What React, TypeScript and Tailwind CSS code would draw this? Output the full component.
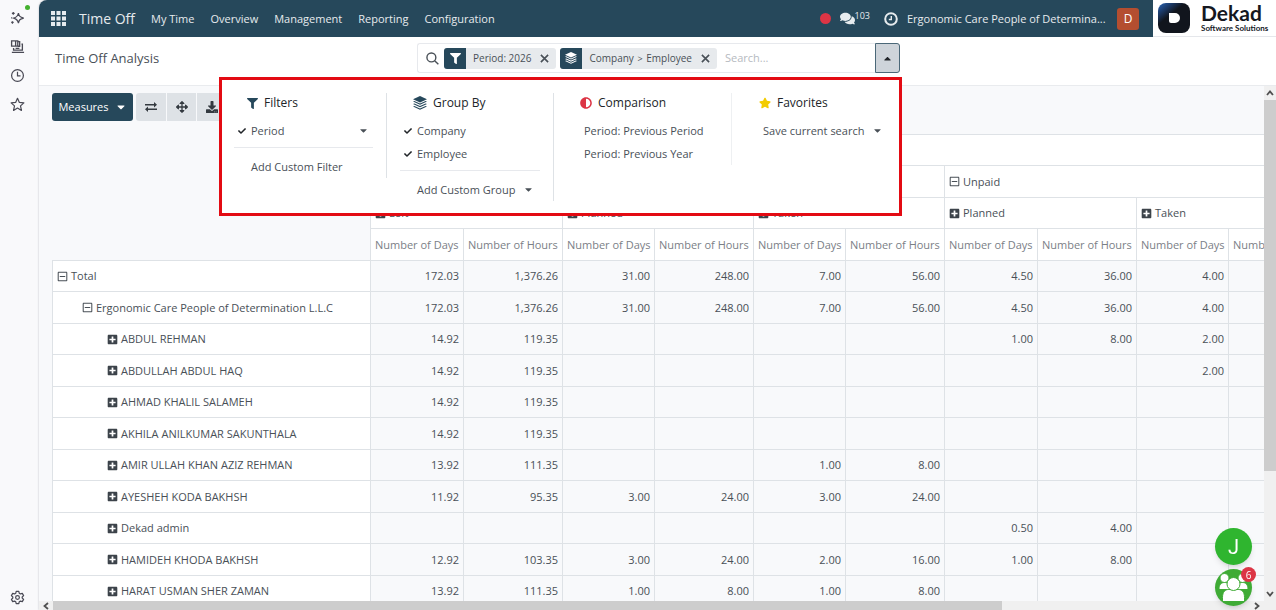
import { useState } from "react";
import type { ReactNode } from "react";
import {
  FaAdjust,
  FaArrowsAlt,
  FaCaretDown,
  FaCaretUp,
  FaCheck,
  FaComments,
  FaDownload,
  FaFilter,
  FaPlusSquare,
  FaRegMinusSquare,
  FaStar,
} from "react-icons/fa";

const NAV_LINKS = ["My Time", "Overview", "Management", "Reporting", "Configuration"];

const MEASURES = ["Number of Days", "Number of Hours"];

const GROUPS = ["Left", "Planned", "Taken", "Planned", "Taken"];

const COLUMN_WIDTHS = [
  "w-[318px]",
  "w-[93px]",
  "w-[99px]",
  "w-[92px]",
  "w-[99px]",
  "w-[92px]",
  "w-[99px]",
  "w-[93px]",
  "w-[99px]",
  "w-[92px]",
  "w-[99px]",
];

interface PivotRow {
  label: string;
  level: 0 | 1 | 2;
  values: string[];
}

const ROWS: PivotRow[] = [
  { label: "Total", level: 0, values: ["172.03", "1,376.26", "31.00", "248.00", "7.00", "56.00", "4.50", "36.00", "4.00", ""] },
  { label: "Ergonomic Care People of Determination L.L.C", level: 1, values: ["172.03", "1,376.26", "31.00", "248.00", "7.00", "56.00", "4.50", "36.00", "4.00", ""] },
  { label: "ABDUL REHMAN", level: 2, values: ["14.92", "119.35", "", "", "", "", "1.00", "8.00", "2.00", ""] },
  { label: "ABDULLAH ABDUL HAQ", level: 2, values: ["14.92", "119.35", "", "", "", "", "", "", "2.00", ""] },
  { label: "AHMAD KHALIL SALAMEH", level: 2, values: ["14.92", "119.35", "", "", "", "", "", "", "", ""] },
  { label: "AKHILA ANILKUMAR SAKUNTHALA", level: 2, values: ["14.92", "119.35", "", "", "", "", "", "", "", ""] },
  { label: "AMIR ULLAH KHAN AZIZ REHMAN", level: 2, values: ["13.92", "111.35", "", "", "1.00", "8.00", "", "", "", ""] },
  { label: "AYESHEH KODA BAKHSH", level: 2, values: ["11.92", "95.35", "3.00", "24.00", "3.00", "24.00", "", "", "", ""] },
  { label: "Dekad admin", level: 2, values: ["", "", "", "", "", "", "0.50", "4.00", "", ""] },
  { label: "HAMIDEH KHODA BAKHSH", level: 2, values: ["12.92", "103.35", "3.00", "24.00", "2.00", "16.00", "1.00", "8.00", "", ""] },
  { label: "HARAT USMAN SHER ZAMAN", level: 2, values: ["13.92", "111.35", "1.00", "8.00", "1.00", "8.00", "", "", "", ""] },
];

const LEVEL_PADDING = ["pl-1", "pl-[29px]", "pl-[54px]"];

const LayersIcon = ({ className }: { className?: string }) => (
  <svg viewBox="0 0 14 14" fill="currentColor" className={className} aria-hidden="true">
    <path d="M7 0 14 3.200 7 6.400 0 3.200Z" />
    <path d="M0 5.600 1.400 5 7 7.500 12.600 5 14 5.600 7 8.800Z" />
    <path d="M0 8.100 1.400 7.500 7 10 12.600 7.500 14 8.100 7 11.300Z" />
    <path d="M0 10.600 1.400 10 7 12.500 12.600 10 14 10.600 7 13.800Z" />
  </svg>
);

const CloseIcon = () => (
  <svg viewBox="0 0 10 10" className="size-[9px]" fill="none" stroke="currentColor" strokeWidth="1.8" aria-hidden="true">
    <path d="M1 1 9 9M9 1 1 9" />
  </svg>
);

const BrowserSidebar = () => {
  const button = "relative flex size-[22px] items-center justify-center text-[#4a4a55]";
  const svg = "size-[15px]";

  return (
    <aside className="flex w-[39px] shrink-0 flex-col items-center bg-[#f9f9fb] pt-1.5 pr-1">
      <button type="button" aria-label="Assistant" className={button}>
        <svg viewBox="0 0 16 16" className={svg} fill="none" stroke="currentColor" strokeWidth="1.3">
          <path d="M9 3.2C9.6 6.6 10.6 7.6 14.6 8.6 10.6 9.6 9.6 10.6 9 14 8.4 10.6 7.4 9.6 4 8.6 7.4 7.6 8.4 6.6 9 3.2Z" />
          <path d="M3.500 2v3M2 3.500h3M2.600 12v2.600M1.300 13.300h2.600M1.200 8.400h1" />
        </svg>
        <span className="absolute top-[-1px] right-[-1px] size-[5px] rounded-full bg-[#44b12f]" />
      </button>
      <button type="button" aria-label="Synced tabs" className={`${button} mt-[7px]`}>
        <svg viewBox="0 0 16 16" className={svg} fill="none" stroke="currentColor" strokeWidth="1.4">
          <path d="M1.700 2h6.600v5.600H1.700ZM6 2v5.600M8.300 2.700h2v5H8.300" />
          <path d="M3.800 9.500v2.300h9.400V5.500h-1M2 14.200h13M6 10h4" />
        </svg>
      </button>
      <button type="button" aria-label="History" className={`${button} mt-[7px]`}>
        <svg viewBox="0 0 16 16" className={svg} fill="none" stroke="currentColor" strokeWidth="1.3">
          <circle cx="8" cy="8" r="6.3" />
          <path d="M8 4v4.3h3.2" />
        </svg>
      </button>
      <button type="button" aria-label="Bookmarks" className={`${button} mt-[7px]`}>
        <svg viewBox="0 0 16 16" className={svg} fill="none" stroke="currentColor" strokeWidth="1.3" strokeLinejoin="round">
          <path d="M8 1.4 10 5.8 14.8 6.3 11.2 9.5 12.2 14.3 8 11.8 3.8 14.3 4.8 9.5 1.2 6.3 6 5.8Z" />
        </svg>
      </button>
      <button type="button" aria-label="Settings" className={`${button} mt-auto mb-[2px]`}>
        <svg viewBox="0 0 16 16" className={svg} fill="none" stroke="currentColor" strokeWidth="1.3" strokeLinejoin="round">
          <path d="M6.600 1.500h2.800l.5 2 1.200.7 2-.6 1.400 2.400L13 7.400v1.200l1.500 1.400-1.400 2.400-2-.6-1.200.7-.5 2H6.600l-.5-2-1.200-.7-2 .6L1.500 10 3 8.600V7.400L1.500 6 2.900 3.600l2 .6 1.200-.7Z" />
          <circle cx="8" cy="8" r="2" />
        </svg>
      </button>
    </aside>
  );
};

const CompanyLogo = () => (
  <div className="flex h-[37px] w-[123px] shrink-0 items-center gap-[11px] border-b border-gray-200 bg-white pl-[5px] text-[#15181f]">
    <svg viewBox="0 0 32 30" className="h-[30px] w-8 shrink-0" aria-hidden="true">
      <defs>
        <linearGradient id="logo" x1="0" y1="0" x2="0.6" y2="0.7">
          <stop offset="0" stopColor="#2a66b8" />
          <stop offset="0.3" stopColor="#1c3c6c" />
          <stop offset="0.6" stopColor="#11151d" />
        </linearGradient>
      </defs>
      <rect width="32" height="30" rx="8" fill="url(#logo)" />
      <path d="M11 10h6a5 5 0 0 1 5 5 5 5 0 0 1-5 5h-4a2 2 0 0 1-2-2Z" fill="#fff" />
    </svg>
    <div className="font-['Lato',sans-serif] font-bold whitespace-nowrap">
      <div className="text-[21px] leading-[20px]">Dekad</div>
      <div className="text-[8px] leading-[10px]">Software Solutions</div>
    </div>
  </div>
);

const NavBar = () => (
  <header className="flex h-[37px] shrink-0 items-center overflow-hidden rounded-tl-lg bg-[#26485b] text-[#e6ebee]">
    <button type="button" aria-label="Home menu" className="ml-3">
      <svg viewBox="0 0 15 15" className="size-[15px]" fill="currentColor">
        {[0, 5.5, 11].map((y) => [0, 5.5, 11].map((x) => <rect key={`${x}-${y}`} x={x} y={y} width="4" height="4" />))}
      </svg>
    </button>
    <a href="#" className="ml-[13px] text-[14px]">Time Off</a>
    <nav className="ml-4 flex gap-4">
      {NAV_LINKS.map((link) => (
        <a key={link} href="#">{link}</a>
      ))}
    </nav>
    <div className="ml-auto flex items-center">
      <span className="size-[11px] rounded-full bg-[#dc3545]" />
      <button type="button" aria-label="Messages" className="ml-[9px] flex items-center">
        <FaComments className="size-[15px]" />
        <span className="mb-1.5 text-[9px]">103</span>
      </button>
      <button type="button" aria-label="Activities" className="ml-[14px]">
        <svg viewBox="0 0 14 14" className="size-[14px]" fill="none" stroke="currentColor" strokeWidth="2">
          <circle cx="7" cy="7" r="5.800" />
          <path d="M7.300 4v3.500H4.800" strokeWidth="1.400" />
        </svg>
      </button>
      <button type="button" className="ml-[9px] w-[200px] text-left whitespace-nowrap">Ergonomic Care People of Determina...</button>
      <span className="mr-[14px] ml-[10px] flex size-[22px] items-center justify-center rounded-[3px] bg-[#b44e30] text-[12px] text-white">D</span>
    </div>
    <CompanyLogo />
  </header>
);

const Facet = ({ icon, label, children }: { icon: ReactNode; label: string; children: ReactNode }) => (
  <div className="flex h-[21px] shrink-0 items-center overflow-hidden rounded-[3px] bg-[#e7eaed] text-[10px]">
    <span className="flex h-full w-[22px] items-center justify-center bg-[#26485b] text-white">{icon}</span>
    <span className="pl-[7px] whitespace-pre">{children}</span>
    <button type="button" aria-label={`Remove ${label}`} className="pr-[7px] pl-[9px] text-[#495057]">
      <CloseIcon />
    </button>
  </div>
);

interface MenuColumnProps {
  icon: ReactNode;
  title: string;
  className: string;
  children: ReactNode;
}

const MenuColumn = ({ icon, title, className, children }: MenuColumnProps) => (
  <section className={className}>
    <h5 className="mb-1.5 flex h-5 items-center gap-1.5 pl-[13px] text-[12px] text-[#212529]">
      {icon}
      {title}
    </h5>
    {children}
  </section>
);

const MenuItem = ({ label, checked, caret }: { label: string; checked?: boolean; caret?: "near" | "end" }) => (
  <button type="button" className="flex h-[23px] w-full items-center pr-1 pl-1 text-left whitespace-nowrap">
    <span className="w-[13px] shrink-0 text-[#212529]">{checked && <FaCheck className="size-2" />}</span>
    {label}
    {caret && <FaCaretDown className={caret === "end" ? "ml-auto size-[11px] shrink-0" : "ml-2 size-[11px] shrink-0"} />}
  </button>
);

const SearchMenu = () => (
  <div className="absolute top-[34px] right-[-2px] z-10 flex h-[139px] w-[683px] items-start border-[3px] border-[#e30b13] bg-white pt-[13px] text-[#495057]">
    <MenuColumn
      icon={<FaFilter className="size-[11px] text-[#26485b]" />}
      title="Filters"
      className="w-[165px] border-r border-[#dee2e6] pr-[13px] pl-3"
    >
      <MenuItem label="Period" checked caret="end" />
      <hr className="mt-[5px] mb-[7px] border-[#e7e9ed]" />
      <MenuItem label="Add Custom Filter" />
    </MenuColumn>
    <MenuColumn
      icon={<LayersIcon className="size-[14px] text-[#26485b]" />}
      title="Group By"
      className="w-[167px] border-r border-[#dee2e6] pr-[13px] pl-[13px]"
    >
      <MenuItem label="Company" checked />
      <MenuItem label="Employee" checked />
      <hr className="mt-[5px] mb-[7px] border-[#e7e9ed]" />
      <MenuItem label="Add Custom Group" caret="near" />
    </MenuColumn>
    <MenuColumn
      icon={<FaAdjust className="size-3 text-[#dc3545]" />}
      title="Comparison"
      className="w-[178px] border-r border-[#eef0f2] pr-[13px] pl-[13px]"
    >
      <MenuItem label="Period: Previous Period" />
      <MenuItem label="Period: Previous Year" />
    </MenuColumn>
    <MenuColumn
      icon={<FaStar className="size-3 text-[#f3cc00]" />}
      title="Favorites"
      className="w-[165px] pl-[14px]"
    >
      <MenuItem label="Save current search" caret="near" />
    </MenuColumn>
  </div>
);

const SearchBar = () => {
  const [query, setQuery] = useState("");
  const [open, setOpen] = useState(true);

  return (
    <div className="relative flex h-[30px] w-[483px] shrink-0">
      <div className="flex min-w-0 flex-1 items-center gap-1 rounded-l-[3px] border border-r-0 border-[#e7e9ed] pl-2">
        <svg viewBox="0 0 14 14" className="mr-px size-[13px] shrink-0" fill="none" stroke="currentColor" strokeWidth="1.500" aria-hidden="true">
          <circle cx="5.800" cy="5.800" r="4.800" />
          <path d="M9.300 9.300 13.300 13.300" />
        </svg>
        <Facet label="Period" icon={<FaFilter className="size-[11px]" />}>
          Period: 2026
        </Facet>
        <Facet label="grouping" icon={<LayersIcon className="size-3" />}>
          Company <span className="px-px text-[9px]">&gt;</span> Employee
        </Facet>
        <input
          type="text"
          aria-label="Search"
          placeholder="Search..."
          value={query}
          onChange={(e) => setQuery(e.target.value)}
          className="min-w-0 flex-1 pl-1 outline-none placeholder:text-[#b6babf]"
        />
      </div>
      <button
        type="button"
        aria-label="Toggle search panel"
        onClick={() => setOpen(!open)}
        className="flex w-[25px] items-center justify-center rounded-r-[3px] border border-[#4b6878] bg-[#ced4da] text-[#212529]"
      >
        <FaCaretUp className="size-[11px]" />
      </button>
      {open && <SearchMenu />}
    </div>
  );
};

const Toolbar = () => (
  <div className="flex h-12 items-start gap-[3px] pt-[7px] pl-[13px]">
    <button type="button" className="flex h-7 w-[81px] items-center justify-center gap-1.5 rounded-[3px] bg-[#26485b] text-white">
      Measures <FaCaretDown className="size-3" />
    </button>
    <div className="flex h-7 gap-px overflow-hidden rounded-[3px] text-[#343a40]">
      <button type="button" aria-label="Flip axis" className="flex w-[30px] items-center justify-center bg-[#dee2e6]">
        <svg viewBox="0 0 12 10" className="h-[10px] w-3" fill="currentColor">
          <path d="M0 2h9V0l3 2.700-3 2.700V3.500H0ZM12 6.500H3V4.600L0 7.300 3 10V8H12Z" />
        </svg>
      </button>
      <button type="button" aria-label="Expand all" className="flex w-[29px] items-center justify-center bg-[#dee2e6]">
        <FaArrowsAlt className="size-3" />
      </button>
      <button type="button" aria-label="Download" className="flex w-[29px] items-center justify-center bg-[#dee2e6]">
        <FaDownload className="size-3" />
      </button>
    </div>
  </div>
);

const HeaderLabel = ({ label, expanded }: { label: string; expanded?: boolean }) => (
  <button type="button" className="flex items-center gap-[3px]">
    {expanded ? <FaRegMinusSquare className="size-[11px]" /> : <FaPlusSquare className="size-[11px] text-[#3c434a]" />}
    {label}
  </button>
);

const PivotTable = () => {
  const line = "border-t border-l border-[#dee2e6]";
  const head = `${line} bg-white px-1 text-left font-normal`;

  return (
    <table className="ml-[13px] w-[1275px] table-fixed border-separate border-spacing-0 whitespace-nowrap text-[#495057]">
      <colgroup>
        {COLUMN_WIDTHS.map((width, i) => (
          <col key={i} className={width} />
        ))}
      </colgroup>
      <thead>
        <tr className="h-[31px]">
          <td rowSpan={4} />
          <th colSpan={10} className={head} />
        </tr>
        <tr className="h-8">
          <th colSpan={6} className={head} />
          <th colSpan={4} className={head}>
            <HeaderLabel label="Unpaid" expanded />
          </th>
        </tr>
        <tr className="h-[31px]">
          {GROUPS.map((group, i) => (
            <th key={i} colSpan={2} className={head}>
              <HeaderLabel label={group} />
            </th>
          ))}
        </tr>
        <tr className="h-8">
          {GROUPS.map((_, i) =>
            MEASURES.map((measure) => (
              <th key={`${i}-${measure}`} className={`${head} text-[#7b8087]`}>
                {measure}
              </th>
            ))
          )}
        </tr>
      </thead>
      <tbody>
        {ROWS.map((row) => (
          <tr key={row.label} className="h-[31px] even:h-8">
            <th scope="row" className={`${line} bg-white text-left font-normal ${LEVEL_PADDING[row.level]}`}>
              <HeaderLabel label={row.label} expanded={row.level < 2} />
            </th>
            {row.values.map((value, i) => (
              <td key={i} className={`${line} pr-1 text-right`}>
                {value}
              </td>
            ))}
          </tr>
        ))}
      </tbody>
    </table>
  );
};

const Chevron = ({ d }: { d: string }) => (
  <svg viewBox="0 0 8 8" className="size-2 shrink-0" fill="none" stroke="#505050" strokeWidth="1.800" aria-hidden="true">
    <path d={d} />
  </svg>
);

const VerticalScrollbar = () => (
  <div className="flex w-3 shrink-0 flex-col items-center bg-[#f0f0f0]">
    <div className="flex h-[14px] items-center"><Chevron d="M1 6 4 2.500 7 6" /></div>
    <div className="h-[72%] w-full bg-[#cdcdcd]" />
    <div className="mt-auto flex h-[14px] items-center"><Chevron d="M1 2 4 5.500 7 2" /></div>
  </div>
);

const HorizontalScrollbar = () => (
  <div className="flex h-[9px] shrink-0 items-center bg-[#f0f0f0] pr-3">
    <div className="flex w-[14px] justify-center"><Chevron d="M6 1 2.500 4 6 7" /></div>
    <div className="h-full w-[949px] bg-[#cdcdcd]" />
    <div className="ml-auto flex w-[14px] justify-center"><Chevron d="M2 1 5.500 4 2 7" /></div>
  </div>
);

const ChatBubbles = () => (
  <div className="fixed right-6 bottom-1 z-20 flex flex-col gap-1">
    <button type="button" className="flex size-[37px] items-center justify-center rounded-full bg-[#2fb52f] font-['Roboto',sans-serif] text-[20px] text-white shadow-md">
      J
    </button>
    <button type="button" aria-label="Conversations" className="relative size-[37px] rounded-full bg-[#3fab35] shadow-md">
      <svg viewBox="0 0 37 37" className="size-full" fill="#fff" stroke="#3fab35">
        <circle cx="9.500" cy="9" r="4.500" />
        <circle cx="27.500" cy="9" r="4.500" />
        <path d="M4 20.500c0-5 2-7 5.500-7s5 1 5 7ZM33 20.500c0-5-2-7-5.500-7s-5 1-5 7Z" />
        <path d="M7.500 32.500v-4c0-6 3-8 6-8h10c3 0 6 2 6 8v4Z" />
        <circle cx="18.500" cy="15" r="6.500" />
      </svg>
      <span className="absolute top-[-2px] right-[-4px] flex size-[15px] items-center justify-center rounded-full bg-[#dc3545] text-[10px] text-white">
        6
      </span>
    </button>
  </div>
);

const App = () => {
  return (
    <div className="flex h-screen overflow-hidden bg-[#f9f9fb] font-['Open_Sans','Noto_Sans',sans-serif] text-[11px] leading-[18px] text-[#495057]">
      <BrowserSidebar />
      <div className="flex min-w-0 flex-1 flex-col rounded-tl-lg shadow-[0_0_2px_#b5b8bd]">
        <NavBar />
        <div className="flex h-[49px] shrink-0 items-start border-b border-[#e9ebee] bg-white pt-[6px]">
          <h1 className="w-[378px] pt-[6px] pl-4 text-[13px]">Time Off Analysis</h1>
          <SearchBar />
        </div>
        <div className="flex min-h-0 flex-1 bg-[#f8f9fb]">
          <main className="min-w-0 flex-1 overflow-hidden">
            <Toolbar />
            <PivotTable />
          </main>
          <VerticalScrollbar />
        </div>
        <HorizontalScrollbar />
      </div>
      <ChatBubbles />
    </div>
  );
};

export default App;
